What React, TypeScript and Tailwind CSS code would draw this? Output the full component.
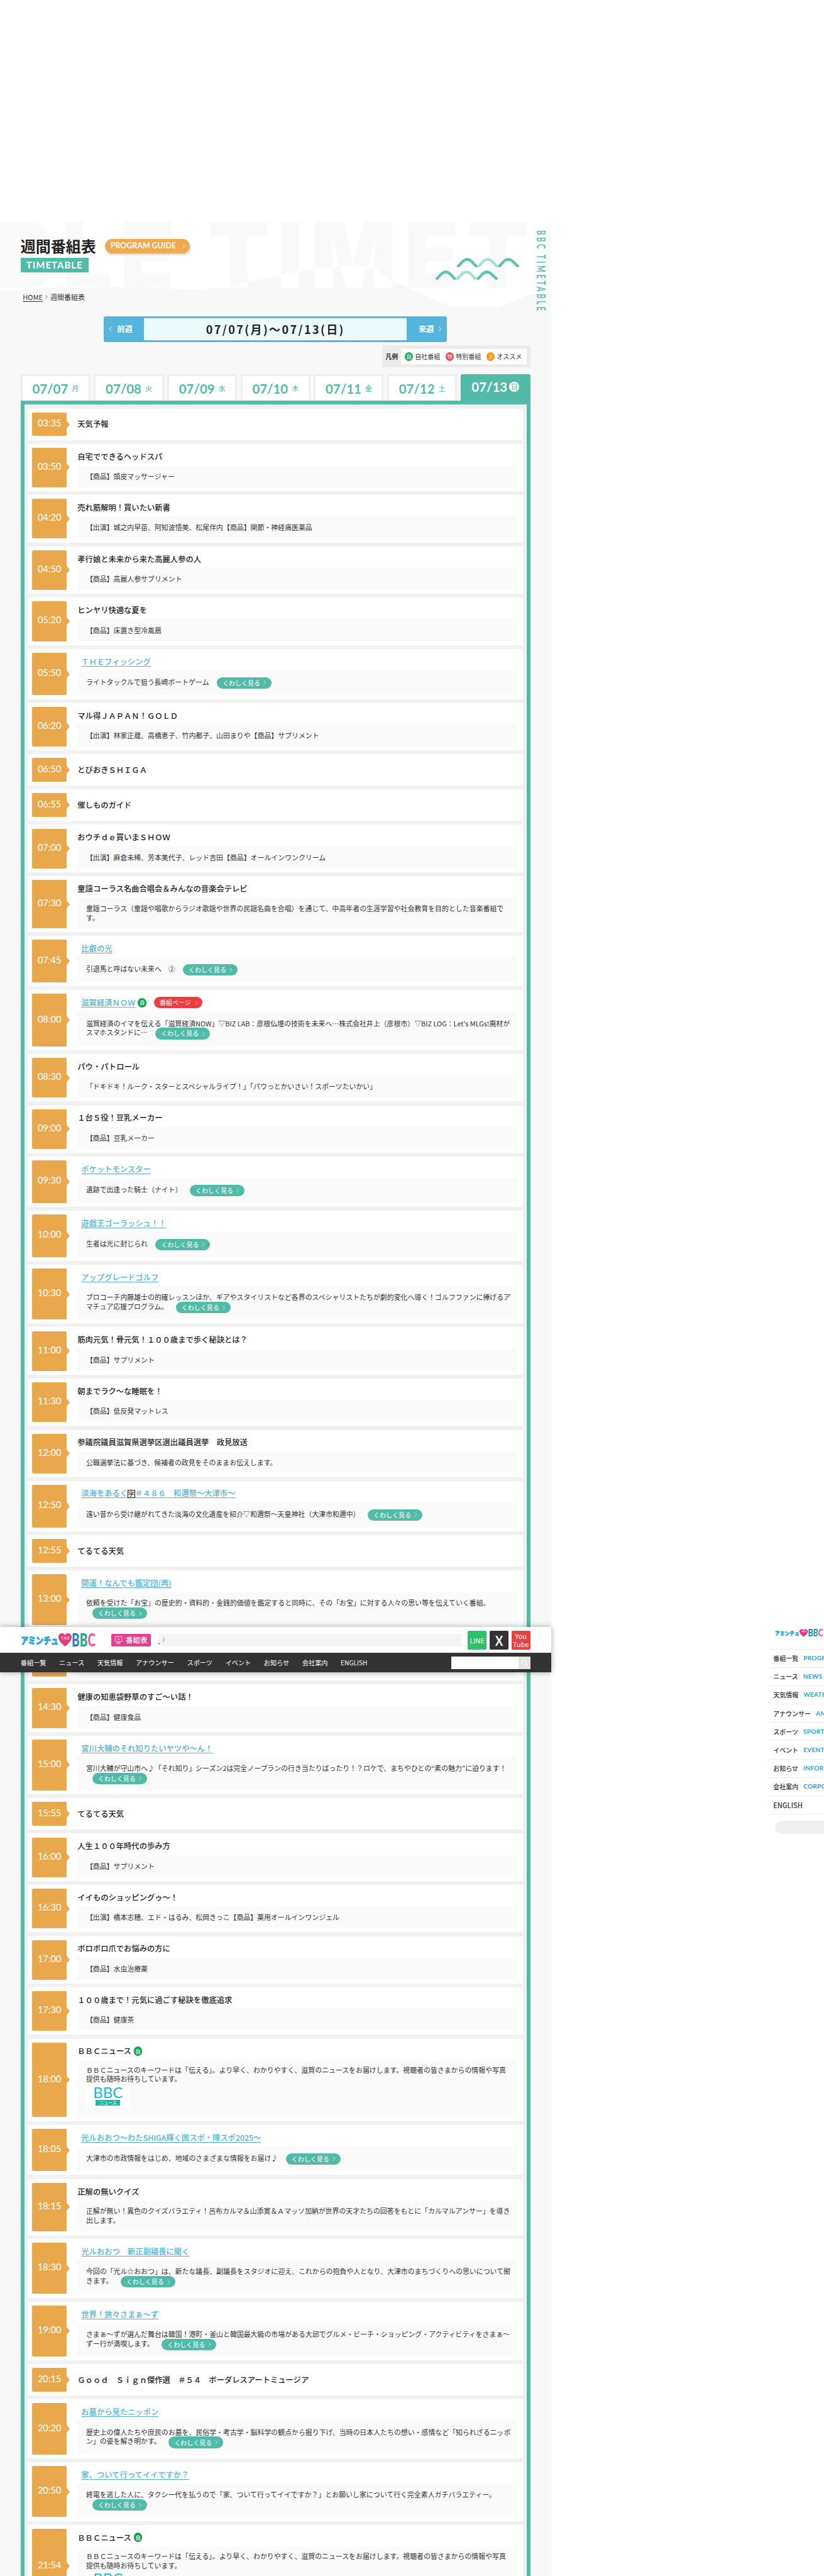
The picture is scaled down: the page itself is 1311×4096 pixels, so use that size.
import type { ReactNode } from "react";
import { ChevronLeft, ChevronRight, Search } from "lucide-react";

const LATIN = "font-['Lato','Noto_Sans_CJK_JP',sans-serif]";

const H = {
  p: "min-h-[50px]",
  o: "min-h-[75.4px]",
  b: "min-h-[79.8px]",
  t: "min-h-[89.3px]",
  w: "min-h-[93.5px]",
  n: "min-h-[95.6px]",
  s: "min-h-[131px]",
};

type Row = {
  t: string;
  title: ReactNode;
  h: keyof typeof H;
  link?: boolean;
  desc?: string;
  btn?: boolean;
  badge?: boolean;
  red?: boolean;
  logo?: boolean;
};

const BBC_DESC =
  "ＢＢＣニュースのキーワードは「伝える」。より早く、わかりやすく、滋賀のニュースをお届けします。視聴者の皆さまからの情報や写真提供も随時お待ちしています。";

const rows: Row[] = [
  { t: "03:35", title: "天気予報", h: "p" },
  { t: "03:50", title: "自宅でできるヘッドスパ", h: "o", desc: "【商品】頭皮マッサージャー" },
  { t: "04:20", title: "売れ筋解明！買いたい新書", h: "o", desc: "【出演】城之内早苗、阿知波悟美、松尾伴内【商品】関節・神経痛医薬品" },
  { t: "04:50", title: "孝行娘と未来から来た高麗人参の人", h: "o", desc: "【商品】高麗人参サプリメント" },
  { t: "05:20", title: "ヒンヤリ快適な夏を", h: "o", desc: "【商品】床置き型冷風扇" },
  { t: "05:50", title: "ＴＨＥフィッシング", h: "b", link: true, btn: true, desc: "ライトタックルで狙う長崎ボートゲーム" },
  { t: "06:20", title: "マル得ＪＡＰＡＮ！ＧＯＬＤ", h: "o", desc: "【出演】林家正蔵、高橋恵子、竹内都子、山田まりや【商品】サプリメント" },
  { t: "06:50", title: "とびおきＳＨＩＧＡ", h: "p" },
  { t: "06:55", title: "催しものガイド", h: "p" },
  { t: "07:00", title: "おウチｄｅ買いまＳＨＯＷ", h: "o", desc: "【出演】麻倉未稀、芳本美代子、レッド吉田【商品】オールインワンクリーム" },
  { t: "07:30", title: "童謡コーラス名曲合唱会＆みんなの音楽会テレビ", h: "t", desc: "童謡コーラス（童謡や唱歌からラジオ歌謡や世界の民謡名曲を合唱）を通じて、中高年者の生涯学習や社会教育を目的とした音楽番組です。" },
  { t: "07:45", title: "比叡の光", h: "b", link: true, btn: true, desc: "引退馬と呼ばない未来へ　②" },
  { t: "08:00", title: "滋賀経済ＮＯＷ", h: "n", link: true, btn: true, badge: true, red: true, desc: "滋賀経済のイマを伝える「滋賀経済NOW」▽BIZ LAB：彦根仏壇の技術を未来へ…株式会社井上（彦根市）▽BIZ LOG：Let's MLGs!廃材がスマホスタンドに…" },
  { t: "08:30", title: "パウ・パトロール", h: "o", desc: "「ドキドキ！ルーク・スターとスペシャルライブ！」「パウっとかいさい！スポーツたいかい」" },
  { t: "09:00", title: "１台５役！豆乳メーカー", h: "o", desc: "【商品】豆乳メーカー" },
  { t: "09:30", title: "ポケットモンスター", h: "b", link: true, btn: true, desc: "遺跡で出逢った騎士（ナイト）" },
  { t: "10:00", title: "遊戯王ゴーラッシュ！！", h: "b", link: true, btn: true, desc: "生者は光に封じられ" },
  { t: "10:30", title: "アップグレードゴルフ", h: "w", link: true, btn: true, desc: "プロコーチ内藤雄士の的確レッスンほか、ギアやスタイリストなど各界のスペシャリストたちが劇的変化へ導く！ゴルフファンに捧げるアマチュア応援プログラム。" },
  { t: "11:00", title: "筋肉元気！骨元気！１００歳まで歩く秘訣とは？", h: "o", desc: "【商品】サプリメント" },
  { t: "11:30", title: "朝までラク～な睡眠を！", h: "o", desc: "【商品】低反発マットレス" },
  { t: "12:00", title: "参議院議員滋賀県選挙区選出議員選挙　政見放送", h: "o", desc: "公職選挙法に基づき、候補者の政見をそのままお伝えします。" },
  {
    t: "12:50",
    title: (
      <>
        淡海をあるく
        <span className="inline-block border border-black text-[9.5px] leading-[11px] text-[#222]">字</span>
        　＃４８６　和邇祭～大津市～
      </>
    ),
    h: "b",
    link: true,
    btn: true,
    desc: "遠い昔から受け継がれてきた淡海の文化遺産を紹介▽和邇祭～天皇神社（大津市和邇中）",
  },
  { t: "12:55", title: "てるてる天気", h: "p" },
  { t: "13:00", title: "開運！なんでも鑑定団(再)", h: "w", link: true, btn: true, desc: "依頼を受けた「お宝」の歴史的・資料的・金銭的価値を鑑定すると同時に、その「お宝」に対する人々の思い等を伝えていく番組。" },
  { t: "14:00", title: "健康情報", h: "o", desc: "【商品】健康食品" },
  { t: "14:30", title: "健康の知恵袋野草のすご～い話！", h: "o", desc: "【商品】健康食品" },
  { t: "15:00", title: "宮川大輔のそれ知りたいヤツや～ん！", h: "w", link: true, btn: true, desc: "宮川大輔が守山市へ♪「それ知り」シーズン2は完全ノープランの行き当たりばったり！？ロケで、まちやひとの“素の魅力”に迫ります！" },
  { t: "15:55", title: "てるてる天気", h: "p" },
  { t: "16:00", title: "人生１００年時代の歩み方", h: "o", desc: "【商品】サプリメント" },
  { t: "16:30", title: "イイものショッピングゥ～！", h: "o", desc: "【出演】橋本志穂、エド・はるみ、松岡きっこ【商品】薬用オールインワンジェル" },
  { t: "17:00", title: "ボロボロ爪でお悩みの方に", h: "o", desc: "【商品】水虫治療薬" },
  { t: "17:30", title: "１００歳まで！元気に過ごす秘訣を徹底追求", h: "o", desc: "【商品】健康茶" },
  { t: "18:00", title: "ＢＢＣニュース", h: "s", badge: true, logo: true, desc: BBC_DESC },
  { t: "18:05", title: "光ルおおつ～わたSHIGA輝く国スポ・障スポ2025～", h: "b", link: true, btn: true, desc: "大津市の市政情報をはじめ、地域のさまざまな情報をお届け♪" },
  { t: "18:15", title: "正解の無いクイズ", h: "t", desc: "正解が無い！異色のクイズバラエティ！呂布カルマ＆山添寛＆Ａマッソ加納が世界の天才たちの回答をもとに「カルマルアンサー」を導き出します。" },
  { t: "18:30", title: "光ルおおつ　新正副議長に聞く", h: "w", link: true, btn: true, desc: "今回の「光ル☆おおつ」は、新たな議長、副議長をスタジオに迎え、これからの抱負や人となり、大津市のまちづくりへの思いについて聞きます。" },
  { t: "19:00", title: "世界！旅々さまぁ～ず", h: "w", link: true, btn: true, desc: "さまぁ～ずが選んだ舞台は韓国！港町・釜山と韓国最大級の市場がある大邱でグルメ・ビーチ・ショッピング・アクティビティをさまぁ～ずー行が満喫します。" },
  { t: "20:15", title: "Ｇｏｏｄ　Ｓｉｇｎ傑作選　＃５４　ボーダレスアートミュージア", h: "p" },
  { t: "20:20", title: "お墓から見たニッポン", h: "w", link: true, btn: true, desc: "歴史上の偉人たちや庶民のお墓を、民俗学・考古学・脳科学の観点から掘り下げ、当時の日本人たちの想い・感情など「知られざるニッポン」の姿を解き明かす。" },
  { t: "20:50", title: "家、ついて行ってイイですか？", h: "w", link: true, btn: true, desc: "終電を逃した人に、タクシー代を払うので「家、ついて行ってイイですか？」とお願いし家について行く完全素人ガチバラエティー。" },
  { t: "21:54", title: "ＢＢＣニュース", h: "s", badge: true, logo: true, desc: BBC_DESC },
];

const tabs = [
  ["07/07", "月"],
  ["07/08", "火"],
  ["07/09", "水"],
  ["07/10", "木"],
  ["07/11", "金"],
  ["07/12", "土"],
];

const navItems = ["番組一覧", "ニュース", "天気情報", "アナウンサー", "スポーツ", "イベント", "お知らせ", "会社案内", "ENGLISH"];

const sideItems = [
  ["番組一覧", "PROGRAM LIST"],
  ["ニュース", "NEWS"],
  ["天気情報", "WEATHER"],
  ["アナウンサー", "ANNOUNCER"],
  ["スポーツ", "SPORTS"],
  ["イベント", "EVENT"],
  ["お知らせ", "INFORMATION"],
  ["会社案内", "CORPORATE"],
  ["ENGLISH", ""],
];

function Logo({ className }: { className: string }) {
  return (
    <svg viewBox="0 0 119 23" preserveAspectRatio="none" className={className}>
      <text x="0" y="17.5" fontSize="15" fontWeight="900" fill="#1ea4e0" stroke="#1ea4e0" strokeWidth="0.7" textLength="60" lengthAdjust="spacingAndGlyphs" fontFamily="'Noto Sans CJK JP',sans-serif">
        アミンチュ
      </text>
      <path transform="translate(60,1)" d="M10.5 21 C3 15 0 10 0 6 C0 2 3 0 6 0 C8 0 9.8 1 10.5 3 C11.2 1 13 0 15 0 C18.5 0 21 2.5 21 6 C21 10 18 15 10.5 21Z" fill="#e4397f" />
      <text x="64" y="9.5" fontSize="4.6" fontWeight="700" fill="#fff" fontFamily="'Noto Sans CJK JP',sans-serif">てれび</text>
      <text x="81" y="21.5" fontSize="29" fontWeight="900" fontFamily="Lato,sans-serif" textLength="38" lengthAdjust="spacingAndGlyphs">
        <tspan fill="#2a7fb8">B</tspan>
        <tspan fill="#1ea58a">B</tspan>
        <tspan fill="#e6609f">C</tspan>
      </text>
    </svg>
  );
}

function Wave({ className }: { className: string }) {
  return (
    <svg viewBox="0 0 103 16" className={className} fill="none" strokeWidth="4.6">
      <path d="M1 15 L10 5.5 Q17 -0.5 24 5.5 L33 15" stroke="#5fc3b0" />
      <path d="M35 15 L44 5.5 Q51 -0.5 58 5.5 L67 15" stroke="#a7dfd3" />
      <path d="M69 15 L78 5.5 Q85 -0.5 92 5.5 L102 15" stroke="#5fc3b0" />
    </svg>
  );
}

function MoreButton() {
  return (
    <span className="ml-[10px] inline-flex h-[18.1px] w-[87px] items-center justify-between rounded-full bg-[#52bba8] pl-[9px] pr-[5px] align-middle text-[10px] leading-none text-white">
      くわしく見る
      <ChevronRight size={11} strokeWidth={1.6} />
    </span>
  );
}

function Badge() {
  return (
    <span className="ml-[4px] inline-flex h-[14.5px] w-[13.5px] items-center justify-center rounded-full bg-[#15a052] text-[8px] leading-none text-white">
      自
    </span>
  );
}

function ProgramRow({ row }: { row: Row }) {
  const isPlain = !row.desc;
  return (
    <div className={`flex bg-white py-[6.1px] pl-[6.1px] pr-[8.9px] ${H[row.h]}`}>
      <div className={`relative flex w-[55.3px] shrink-0 items-center justify-center rounded-[2px] bg-[#eaa84d] pb-[3px] text-[14.6px] text-white ${LATIN}`}>
        {row.t}
        <span className="absolute left-full top-1/2 h-0 w-0 -translate-y-1/2 border-y-[6px] border-l-[5.5px] border-y-transparent border-l-[#eaa84d]" />
      </div>
      <div className="ml-[17px] flex min-w-0 flex-1 flex-col">
        <div className={`flex items-center text-[12.3px] font-medium leading-none text-[#222] ${isPlain ? "flex-1" : "h-[28px] shrink-0"}`}>
          <span className={row.link ? "ml-[6px] text-[#4fb3d8] underline underline-offset-2" : ""}>{row.title}</span>
          {row.badge && <Badge />}
          {row.red && (
            <span className="ml-[12px] inline-flex h-[18px] w-[77px] items-center justify-between rounded-full bg-[#ee3d42] pl-[9px] pr-[4px] text-[10px] font-normal text-white">
              番組ページ
              <ChevronRight size={11} strokeWidth={1.6} />
            </span>
          )}
        </div>
        {row.desc && (
          <div className={`flex flex-1 bg-[#fafafa] pl-[13.6px] pr-[9.5px] ${row.logo ? "flex-col pt-[8px]" : "items-center"}`}>
            <p className="text-[10.92px] leading-[14.8px] text-[#333]">
              {row.desc}
              {row.btn && " "}
              {row.btn && <MoreButton />}
            </p>
            {row.logo && (
              <div className="mt-[3px] flex h-[36px] w-[70px] flex-col items-center bg-white">
                <span className={`text-[24px] leading-[22px] text-[#19b5d8] ${LATIN}`}>BBC</span>
                <span className="mt-[1px] flex h-[9px] w-[39px] items-center justify-center bg-[#1db8a8] text-[7px] leading-none text-white">ニュース</span>
              </div>
            )}
          </div>
        )}
      </div>
    </div>
  );
}

function BigLetters({ className }: { className: string }) {
  return (
    <div className={`absolute left-[-10px] top-[312px] whitespace-nowrap font-['Inter',sans-serif] text-[143px] font-black leading-[1.3] tracking-[12px] ${className}`}>
      BLE TIMETA
    </div>
  );
}

function LegendItem({ mark, bg, label }: { mark: string; bg: string; label: string }) {
  return (
    <span className="flex items-center gap-[3px]">
      <span className={`flex h-[14px] w-[13px] items-center justify-center rounded-full text-[8px] leading-none text-white ${bg}`}>{mark}</span>
      <span className="text-[10px] text-[#333]">{label}</span>
    </span>
  );
}

export default function App() {
  return (
    <div className="relative h-[4096px] w-[1311px] overflow-hidden bg-white font-['Noto_Sans_CJK_JP','Noto_Sans',sans-serif]">
      <main className="relative h-[4096px] w-[876.6px] overflow-hidden bg-[#f8f8f8]">
        <BigLetters className="text-white" />
        <div className="absolute inset-0 bg-white [clip-path:polygon(0_0,877px_0,877px_462px,843px_469px,792px_488px,719px_488px,620px_445px,600px_428px,566px_421px,481px_430px,396px_448px,374px_455px,317px_461px,226px_457px,113px_455px,0_463px)]">
          <BigLetters className="text-[#f9f9f9]" />
        </div>

        <div className="relative flex flex-col px-[32.8px] pt-[379.6px]">
          <div className="relative flex h-[23.2px] items-center">
            <h1 className="text-[24px] font-bold leading-none text-[#222]">週間番組表</h1>
            <span className={`ml-[14px] flex h-[23.2px] w-[135px] items-center justify-between whitespace-nowrap rounded-full bg-[#f0a94f] pl-[9px] pr-[3px] text-[12.4px] font-bold text-white shadow-[2px_3px_0_#e4e4e4] ${LATIN}`}>
              PROGRAM GUIDE
              <ChevronRight size={13} strokeWidth={1.6} />
            </span>
          </div>
          <div className={`mt-[6.8px] flex h-[23.9px] w-[108px] items-center justify-center bg-[#52bba8] text-[15px] font-bold tracking-[1px] text-white ${LATIN}`}>
            TIMETABLE
          </div>
          <div className="mt-[31.4px] flex h-[15px] items-center pl-[3.5px] text-[11px] leading-none text-[#333]">
            <span className="underline underline-offset-2">HOME</span>
            <ChevronRight size={10} strokeWidth={1.5} className="mx-[1px]" />
            <span>週間番組表</span>
          </div>

          <div className="mx-auto mt-[23px] flex h-[41px] w-[546px] items-stretch rounded-[3px] bg-[#55b5dc]">
            <div className="flex w-[64.2px] items-center gap-[3px] pl-[4px] text-[12.2px] font-bold text-white">
              <ChevronLeft size={14} strokeWidth={1.5} />
              前週
            </div>
            <div className="my-[3px] flex flex-1 items-center justify-center bg-[#ebfbfe] text-[18px] font-bold tracking-[2.4px] text-[#222]">
              07/07(月)〜07/13(日)
            </div>
            <div className="flex w-[64.2px] items-center justify-end gap-[3px] pr-[4px] text-[12.2px] font-bold text-white">
              来週
              <ChevronRight size={14} strokeWidth={1.5} />
            </div>
          </div>

          <div className="mt-[5.6px] flex h-[34.8px] w-[236px] items-center self-end bg-[#ececec] px-[5.5px]">
            <span className="w-[25px] shrink-0 text-[10px] font-bold text-[#333]">凡例</span>
            <div className="flex h-[24px] flex-1 items-center gap-[9px] bg-white pl-[6px]">
              <LegendItem mark="自" bg="bg-[#2cab71]" label="自社番組" />
              <LegendItem mark="特" bg="bg-[#e3545a]" label="特別番組" />
              <LegendItem mark="♪" bg="bg-[#f39a1f]" label="オススメ" />
            </div>
          </div>

          <div className="mt-[10.9px] grid h-[42.3px] grid-cols-7 gap-x-[5.6px]">
            {tabs.map(([d, w]) => (
              <div key={d} className={`flex items-center justify-center gap-[6px] border-x-[3px] border-t-[3px] border-[#eeeeee] bg-white text-[#52bba8] ${LATIN}`}>
                <span className="text-[20.4px] font-bold leading-none">{d}</span>
                <span className="text-[11px] leading-none [text-shadow:0_0_4px_#cdeee8]">{w}</span>
              </div>
            ))}
            <div className={`flex items-center justify-center gap-[3px] rounded-t-[2px] bg-[#52bba8] pb-[3px] text-white ${LATIN}`}>
              <span className="text-[20.4px] font-bold leading-none">07/13</span>
              <span className="flex h-[16px] w-[16px] items-center justify-center rounded-full bg-white text-[11px] leading-none text-[#52bba8]">日</span>
            </div>
          </div>

          <section className="flex flex-col gap-[6.14px] border-[6px] border-[#52bba8] bg-[#f1f1f1] p-[6.1px]">
            {rows.map((r) => (
              <ProgramRow key={r.t} row={r} />
            ))}
          </section>
        </div>

        <div className="absolute left-[725px] top-[409.6px]">
          <Wave className="block h-[15.4px] w-[103px]" />
        </div>
        <div className="absolute left-[691px] top-[429.6px]">
          <Wave className="block h-[15.4px] w-[103px]" />
        </div>
      </main>

      <div className={`absolute left-[855px] top-[366px] origin-center scale-x-[1.7] text-[11.5px] font-bold leading-none tracking-[3.4px] text-[#5fc3b0] [writing-mode:vertical-rl] ${LATIN}`}>
        BBC TIMETABLE
      </div>

      {/* fixed header caught mid-scroll */}
      <header className="absolute left-0 top-[2587.4px] w-[876.6px] shadow-[0_0_9px_rgba(0,0,0,0.35)]">
        <div className="flex h-[41px] items-center bg-white px-[32.8px]">
          <Logo className="h-[23px] w-[119px] shrink-0" />
          <span className="ml-[25px] flex h-[20.5px] w-[63px] shrink-0 items-center justify-center gap-[5px] rounded-[2px] bg-[#e3408f] text-[11.5px] font-medium text-white">
            <svg viewBox="0 0 16 16" className="h-[13px] w-[13px]" fill="none" stroke="#fff" strokeWidth="1">
              <rect x="1.5" y="1.5" width="13" height="10" rx="1" />
              <path d="M4 14.5h8" strokeWidth="1.4" />
              <text x="8" y="8.5" fontSize="4.5" fill="#fff" stroke="none" textAnchor="middle">TV</text>
            </svg>
            番組表
          </span>
          <div className="ml-[12px] flex h-[20.5px] flex-1 items-center bg-[#f5f5f5] text-[10px] text-[#333]">
            <span className="underline">&nbsp;</span>
            <ChevronRight size={11} strokeWidth={1.4} className="ml-[1px]" />
          </div>
          <span className="ml-[9px] flex h-[30px] w-[30px] shrink-0 items-center justify-center rounded-[2px] bg-[#2fc26a] text-[11px] text-white">LINE</span>
          <span className="ml-[4.8px] flex h-[30px] w-[30px] shrink-0 items-center justify-center rounded-[2px] bg-[#333333] text-[22px] font-medium text-white">X</span>
          <span className="ml-[4.8px] flex h-[30px] w-[30px] shrink-0 flex-col items-center justify-center rounded-[2px] bg-[#e84141] text-[11px] leading-[12.5px] text-white">
            <span>You</span>
            <span>Tube</span>
          </span>
        </div>
        <nav className="flex h-[30.7px] items-center bg-[#333333] pl-[32.8px] pr-[32.8px]">
          <ul className="flex flex-1 gap-[20.5px] text-[10.2px] text-white">
            {navItems.map((n) => (
              <li key={n}>{n}</li>
            ))}
          </ul>
          <div className="flex h-[20px] w-[126.3px] bg-white">
            <div className="flex-1" />
            <div className="flex w-[19px] items-center justify-center bg-[#e5e5e5]">
              <Search size={11} color="#fff" strokeWidth={2.2} />
            </div>
          </div>
        </nav>
      </header>

      {/* slide-out menu, offset to the right of the page */}
      <aside className="absolute left-[1223.4px] top-[2580px] w-[200px] bg-white">
        <div className="flex h-[41.5px] items-center pl-[10px]">
          <Logo className="h-[13px] w-[77px] -translate-y-[4px]" />
        </div>
        <ul className="border-t border-[#efefef]">
          {sideItems.map(([ja, en]) => (
            <li key={ja} className="flex h-[29.2px] items-center gap-[8px] border-b border-[#efefef] pl-[6.8px] text-[10px] font-medium text-[#333]">
              <span className={ja === "ENGLISH" ? "text-[11px]" : ""}>{ja}</span>
              {en && <span className={`text-[10px] font-bold tracking-[0.3px] text-[#25a5d8] ${LATIN}`}>{en}</span>}
            </li>
          ))}
        </ul>
        <div className="ml-[9.5px] mt-[10px] h-[20.5px] rounded-full bg-[#eeeeee]" />
      </aside>
    </div>
  );
}
